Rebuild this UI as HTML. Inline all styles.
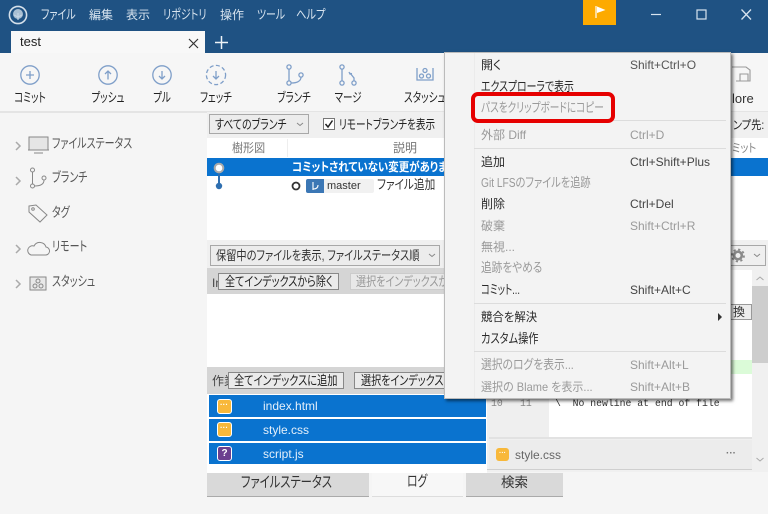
<!DOCTYPE html>
<html lang="ja"><head><meta charset="utf-8">
<style>
html,body{margin:0;padding:0;width:768px;height:514px;overflow:hidden;background:#f5f5f5}
body{position:relative;font-family:"Liberation Sans","Noto Sans CJK JP",sans-serif;color:#333}
.a,.t{position:absolute}
.t{white-space:nowrap;font-size:12px;line-height:16px;letter-spacing:0;font-feature-settings:"palt";transform-origin:left center}
.m{color:#d8e4ef}
.c{font-size:13px;transform:translateX(-50%) scaleX(.73);transform-origin:center;color:#222}
.g{color:#9a9a9a}
.k{color:#2a2a2a}
.s{color:#555;font-size:13.5px;transform:scaleX(.74)}
svg{position:absolute;overflow:visible}
.btn{position:absolute;background:#efefef;border:1px solid #a8a8a8;box-sizing:border-box}
.row{position:absolute;left:209px;width:277px;height:22px;background:#0a73cf}
.sh{font-size:12px;letter-spacing:0}
.sep{position:absolute;left:474px;width:252px;height:1px;background:#dcdcdc}
.lat{font-size:12px;letter-spacing:0}
</style></head><body>

<!-- header -->
<div class="a" style="left:0;top:0;width:768px;height:53px;background:#1f5283"></div>
<svg style="left:7px;top:4px" width="22" height="22" viewBox="0 0 22 22"><circle cx="11" cy="11" r="8.6" fill="none" stroke="#d5e0ea" stroke-width="1.6"/><circle cx="11" cy="10" r="5" fill="#a9bfd3"/><path d="M11 9v7M7 11l4 2 4-2" stroke="#c5d5e3" stroke-width="1.2" fill="none"/></svg>
<span class="t m" style="left:41px;top:7px;font-size:13px;transform:scaleX(.77)">ファイル</span>
<span class="t m" style="left:89px;top:7px">編集</span>
<span class="t m" style="left:126px;top:7px">表示</span>
<span class="t m" style="left:163px;top:7px;font-size:13px;transform:scaleX(.77)">リポジトリ</span>
<span class="t m" style="left:220px;top:7px">操作</span>
<span class="t m" style="left:257px;top:7px;font-size:13px;transform:scaleX(.76)">ツール</span>
<span class="t m" style="left:296px;top:7px;font-size:13px;transform:scaleX(.79)">ヘルプ</span>

<div class="a" style="left:583px;top:0;width:33px;height:25px;background:#fdaa00"></div>
<svg style="left:595px;top:5px" width="14" height="14" viewBox="0 0 14 14"><path d="M1 1v12" stroke="#fff" stroke-width="1.2"/><path d="M2 1.5L10.5 5 2 8z" fill="#fff"/></svg>
<svg style="left:650px;top:8px" width="110" height="14" viewBox="0 0 110 14"><path d="M1 6.5h10" stroke="#d8e4ef" stroke-width="1.2"/><rect x="47" y="2" width="9" height="9" fill="none" stroke="#d8e4ef" stroke-width="1.2"/><path d="M91.5 1.5l9.5 10M101 1.5l-9.5 10" stroke="#d8e4ef" stroke-width="1.3"/></svg>

<!-- tab -->
<div class="a" style="left:11px;top:31px;width:194px;height:23px;background:#f8f8f8"></div>
<span class="t" style="left:20px;top:34px;font-size:13px;color:#222">test</span>
<svg style="left:188px;top:38px" width="11" height="11" viewBox="0 0 11 11"><path d="M1 1l9 9M10 1l-9 9" stroke="#333" stroke-width="1.2"/></svg>
<svg style="left:214px;top:35px" width="15" height="15" viewBox="0 0 15 15"><path d="M7.5 1v13M1 7.5h13" stroke="#eef3f7" stroke-width="1.5"/></svg>

<!-- toolbar -->
<div class="a" style="left:0;top:53px;width:768px;height:58px;background:#f6f6f6"></div>
<div class="a" style="left:0;top:110.5px;width:768px;height:2px;background:#e4e4e4"></div>
<svg style="left:0;top:53px" width="450" height="40" viewBox="0 0 450 40" fill="none" stroke="#7f9fc9" stroke-width="1.3">
<circle cx="30" cy="22" r="9.2"/><path d="M30 18v8M26 22h8"/>
<circle cx="108" cy="22" r="9.2"/><path d="M108 26.5v-8M105 21l3-3 3 3"/>
<circle cx="162" cy="22" r="9.2"/><path d="M162 18v8M159 23l3 3 3-3"/>
<circle cx="216" cy="22" r="9.6" stroke-dasharray="4 2.4"/><path d="M216 18v8M213 23l3 3 3-3"/>
<circle cx="289" cy="14" r="2.1"/><circle cx="289" cy="30" r="2.1"/><circle cx="301" cy="22" r="2.1"/><path d="M289 16v12M291 30c6 0 10-2 10-6"/>
<circle cx="342" cy="14" r="2.1"/><circle cx="342" cy="30" r="2.1"/><circle cx="354" cy="30" r="2.1"/><path d="M342 16v12M354 28v-3l-4-5M349 19l1 2 2-.5"/>
<path d="M417 15v12h16V15M417 27h16"/><circle cx="425" cy="17.5" r="2"/><circle cx="421.5" cy="23" r="2"/><circle cx="428.5" cy="23" r="2"/>
</svg>
<span class="t c" style="left:30px;top:90px">コミット</span>
<span class="t c" style="left:108px;top:90px">プッシュ</span>
<span class="t c" style="left:162px;top:90px">プル</span>
<span class="t c" style="left:216px;top:90px">フェッチ</span>
<span class="t c" style="left:294px;top:90px">ブランチ</span>
<span class="t c" style="left:348px;top:90px">マージ</span>
<span class="t" style="left:404px;top:90px;color:#222;font-size:13px;transform:scaleX(.74)">スタッシュ</span>
<span class="t" style="left:732px;top:91px;color:#333;font-size:13px">lore</span>
<svg style="left:730px;top:64px" width="24" height="20" viewBox="0 0 24 20" fill="none" stroke="#999" stroke-width="1.1"><path d="M2 3h14l4 3v11H6"/><path d="M10 10h8v7h-8z"/></svg>

<!-- sidebar -->
<svg style="left:14px;top:135px" width="66" height="160" viewBox="0 0 66 160" fill="none" stroke="#888" stroke-width="1">
<g stroke="#aaa" stroke-width="1.5"><path d="M2 7l4 4-4 4M2 42l4 4-4 4M2 110l4 4-4 4M2 145l4 4-4 4"/></g>
<rect x="15" y="2" width="19" height="13" fill="#e5e5e5"/><path d="M14 15h21M20 18h9"/>
<circle cx="18.5" cy="35" r="2"/><circle cx="18.5" cy="51" r="2"/><circle cx="30" cy="43" r="2"/><path d="M18.5 37v12M20.5 51c6 0 9.5-2 9.5-6"/>
<path d="M15 71l7-1 11 10-7 7-11-10z"/><circle cx="19" cy="74" r="1.3"/>
<path d="M17 120h14a4 4 0 0 0 1-8 6.5 6.5 0 0 0-12-1 4.5 4.5 0 0 0-3 9z"/>
<rect x="16" y="142" width="16" height="13" fill="#e8e8e8"/><circle cx="24" cy="146" r="2"/><circle cx="21" cy="151" r="2"/><circle cx="27" cy="151" r="2"/>
</svg>
<span class="t s" style="left:52px;top:136px">ファイルステータス</span>
<span class="t s" style="left:52px;top:170px">ブランチ</span>
<span class="t s" style="left:52px;top:205px">タグ</span>
<span class="t s" style="left:52px;top:239px">リモート</span>
<span class="t s" style="left:52px;top:274px">スタッシュ</span>

<!-- branch filter -->
<div class="a" style="left:207px;top:112px;width:561px;height:360px;background:#f0f0f0"></div>
<div class="btn" style="left:209px;top:114px;width:100px;height:20px;background:#ececec"></div>
<span class="t" style="left:215px;top:117px;color:#222;font-size:13px;transform:scaleX(.76)">すべてのブランチ</span>
<svg style="left:296px;top:122px" width="8" height="5" viewBox="0 0 8 5"><path d="M1 1l3 2.5L7 1" fill="none" stroke="#888"/></svg>
<div class="a" style="left:323px;top:118px;width:12px;height:12px;background:#fff;border:1px solid #777;box-sizing:border-box"></div>
<svg style="left:323px;top:118px" width="12" height="12" viewBox="0 0 12 12"><path d="M2.5 6l2.5 3 4.5-6.5" fill="none" stroke="#222" stroke-width="1.5"/></svg>
<span class="t" style="left:339px;top:117px;color:#222;font-size:13px;transform:scaleX(.74)">リモートブランチを表示</span>
<span class="t" style="left:733px;top:117px;color:#222;transform:scaleX(.85)">ンプ先:</span>

<!-- graph table -->
<div class="a" style="left:207px;top:138px;width:561px;height:102px;background:#fff"></div>
<span class="t" style="left:232px;top:140px;color:#777;transform:scaleX(.92)">樹形図</span>
<span class="t" style="left:393px;top:140px;color:#777">説明</span>
<span class="t" style="left:732px;top:140px;color:#888;transform:scaleX(.85)">ミット</span>
<div class="a" style="left:287px;top:139px;width:1px;height:18px;background:#eee"></div>
<div class="a" style="left:207px;top:158px;width:561px;height:18px;background:#0a73cf"></div>
<svg style="left:207px;top:158px" width="30" height="36" viewBox="0 0 30 36"><path d="M12 14v14" stroke="#2f6fb0" stroke-width="2"/><circle cx="12" cy="10" r="4.3" fill="#fff" stroke="#aaa" stroke-width="2"/><circle cx="12" cy="28" r="3.2" fill="#2f6fb0"/></svg>
<span class="t" style="left:292px;top:159px;color:#fff;font-weight:700;transform:scaleX(.87)">コミットされていない変更がありま</span>
<svg style="left:291px;top:181px" width="10" height="10"><circle cx="5" cy="5" r="3.5" fill="#fff" stroke="#333" stroke-width="1.8"/></svg>
<div class="a" style="left:306px;top:179px;width:68px;height:14px;background:#f1f1f1;border-radius:2px"></div>
<div class="a" style="left:306px;top:179px;width:18px;height:14px;background:#3b77b5;border-radius:2px 0 0 2px"></div>
<svg style="left:310px;top:181px" width="10" height="10" viewBox="0 0 10 10"><path d="M3 1v8M3 8c3 0 5-1 5-4" fill="none" stroke="#fff" stroke-width="1.1"/></svg>
<span class="t" style="left:327px;top:178px;font-size:11px;color:#333">master</span>
<span class="t" style="left:377px;top:177px;color:#333;font-size:13px;transform:scaleX(.82)">ファイル追加</span>

<!-- pending filter -->
<div class="a" style="left:207px;top:240px;width:561px;height:30px;background:#f0f0f0"></div>
<div class="btn" style="left:210px;top:245px;width:230px;height:21px;background:#ececec"></div>
<span class="t" style="left:216px;top:248px;color:#333;font-size:13px;transform:scaleX(.785)">保留中のファイルを表示, ファイルステータス順</span>
<svg style="left:428px;top:253px" width="8" height="5" viewBox="0 0 8 5"><path d="M1 1l3 2.5L7 1" fill="none" stroke="#888"/></svg>
<div class="btn" style="left:728px;top:245px;width:38px;height:21px;background:#efefef"></div>
<svg style="left:730px;top:248px" width="34" height="15" viewBox="0 0 34 15"><circle cx="8" cy="7.5" r="3.8" fill="none" stroke="#8a8a8a" stroke-width="2.6"/><circle cx="8" cy="7.5" r="6" fill="none" stroke="#8a8a8a" stroke-width="1.8" stroke-dasharray="2.2 2.5"/><path d="M24 6l3 2.5L30 6" fill="none" stroke="#888"/></svg>

<!-- staged -->
<div class="a" style="left:207px;top:268px;width:280px;height:26px;background:#d5d5d5"></div>
<span class="t" style="left:212px;top:275px;color:#444">In</span>
<div class="btn" style="left:218px;top:273px;width:121px;height:17px;background:#eaeaea;border-color:#888"></div>
<span class="t" style="left:225px;top:274px;color:#222;font-size:13px;transform:scaleX(.775)">全てインデックスから除く</span>
<div class="btn" style="left:350px;top:273px;width:100px;height:17px;background:#e8e8e8;border-color:#ccc"></div>
<span class="t" style="left:356px;top:274px;color:#999;font-size:13px;transform:scaleX(.775)">選択をインデックスか</span>
<div class="a" style="left:207px;top:294px;width:280px;height:73px;background:#fff"></div>

<!-- unstaged -->
<div class="a" style="left:207px;top:367px;width:280px;height:27px;background:#d5d5d5"></div>
<span class="t" style="left:212px;top:373px;color:#444;width:16px;overflow:hidden">作業</span>
<div class="btn" style="left:228px;top:372px;width:116px;height:17px;background:#eaeaea;border-color:#888"></div>
<span class="t" style="left:234px;top:373px;color:#222;font-size:13px;transform:scaleX(.785)">全てインデックスに追加</span>
<div class="btn" style="left:354px;top:372px;width:100px;height:17px;background:#eaeaea;border-color:#888"></div>
<span class="t" style="left:361px;top:373px;color:#222;font-size:13px;transform:scaleX(.775)">選択をインデックス</span>
<div class="a" style="left:207px;top:394px;width:280px;height:79px;background:#fff"></div>
<div class="row" style="top:395px"></div>
<div class="row" style="top:419px"></div>
<div class="row" style="top:443px;height:21px"></div>
<div class="a" style="left:217px;top:399px;width:15px;height:15px;background:#f8b83a;border:1px solid #fff;box-sizing:border-box;border-radius:3px"></div>
<div class="a" style="left:217px;top:422px;width:15px;height:15px;background:#f8b83a;border:1px solid #fff;box-sizing:border-box;border-radius:3px"></div>
<div class="a" style="left:217px;top:446px;width:15px;height:15px;background:#6b3f8f;border:1px solid #fff;box-sizing:border-box;border-radius:3px;color:#fff;font-size:10px;line-height:13px;text-align:center;font-weight:700">?</div>
<span class="a" style="left:220px;top:401px;color:#fff;font-size:8px;line-height:8px;font-weight:700">···</span>
<span class="a" style="left:220px;top:424px;color:#fff;font-size:8px;line-height:8px;font-weight:700">···</span>
<span class="t lat" style="left:263px;top:398px;color:#e5f0fa">index.html</span>
<span class="t lat" style="left:263px;top:422px;color:#e5f0fa">style.css</span>
<span class="t lat" style="left:263px;top:446px;color:#e5f0fa">script.js</span>

<!-- right pane -->
<div class="a" style="left:489px;top:270px;width:263px;height:167px;background:#fff"></div>
<div class="a" style="left:489px;top:270px;width:60px;height:167px;background:#efefef"></div>
<div class="a" style="left:549px;top:360px;width:203px;height:14px;background:#dbfbd8"></div>
<div class="a" style="left:719px;top:304px;width:33px;height:16px;background:#ececec;border:1px solid #999;box-sizing:border-box"></div>
<span class="t" style="left:733px;top:304px;color:#333">換</span>
<div class="a" style="left:752px;top:270px;width:16px;height:200px;background:#f0f0f0"></div>
<div class="a" style="left:752px;top:286px;width:16px;height:77px;background:#cdcdcd"></div>
<svg style="left:755px;top:275px" width="10" height="190" viewBox="0 0 10 190" fill="none" stroke="#aaa"><path d="M1.5 5l3.5-3 3.5 3M1.5 183l3.5 3 3.5-3"/></svg>
<span class="a" style="left:491px;top:397px;font:9.8px/14px 'Liberation Mono',monospace;color:#888">10</span>
<span class="a" style="left:520px;top:397px;font:9.8px/14px 'Liberation Mono',monospace;color:#888">11</span>
<span class="a" style="left:555px;top:397px;font:9.8px/14px 'Liberation Mono',monospace;color:#333;white-space:pre">\  No newline at end of file</span>
<div class="a" style="left:489px;top:437px;width:263px;height:2px;background:#e2e2e2"></div>
<div class="a" style="left:489px;top:440px;width:263px;height:29px;background:#ececec"></div>
<div class="a" style="left:487px;top:469px;width:265px;height:1px;background:#cfcfcf"></div>
<div class="a" style="left:496px;top:448px;width:13px;height:13px;background:#f8b83a;border-radius:3px"></div>
<span class="a" style="left:499px;top:450px;color:#fff;font-size:7px;line-height:8px;font-weight:700">···</span>
<span class="t lat" style="left:515px;top:447px;color:#666">style.css</span>
<span class="t" style="left:726px;top:446px;color:#777;font-weight:700;font-size:10px">···</span>

<!-- bottom tabs -->
<div class="a" style="left:207px;top:473px;width:162px;height:24px;background:#d9d9d9;border-bottom:1px solid #aaa;box-sizing:border-box"></div>
<div class="a" style="left:372px;top:473px;width:91px;height:24px;background:#f7f7f7;border-bottom:1px solid #ddd;box-sizing:border-box"></div>
<div class="a" style="left:466px;top:473px;width:97px;height:24px;background:#d9d9d9;border-bottom:1px solid #aaa;box-sizing:border-box"></div>
<span class="t" style="left:241px;top:475px;font-size:15px;color:#333;transform:scaleX(.756)">ファイルステータス</span>
<span class="t" style="left:407px;top:474px;font-size:15px;color:#333;transform:scaleX(.72)">ログ</span>
<span class="t" style="left:501px;top:475px;font-size:13.5px;color:#333">検索</span>

<!-- context menu -->
<div class="a" style="left:444px;top:52px;width:287px;height:347px;background:#f3f3f3;border:1px solid #bbb;box-sizing:border-box;box-shadow:2px 2px 3px rgba(0,0,0,.55)"></div>
<div class="a" style="left:474px;top:53px;width:1px;height:345px;background:#ebebeb"></div>
<div class="sep" style="top:120px"></div>
<div class="sep" style="top:148px"></div>
<div class="sep" style="top:303px"></div>
<div class="sep" style="top:351px"></div>

<span class="t k" style="left:481px;top:57px">開く</span><span class="t sh" style="left:630px;top:57px;color:#555">Shift+Ctrl+O</span>
<span class="t k" style="left:481px;top:79px;font-size:13px;transform:scaleX(.76)">エクスプローラで表示</span>
<span class="t g" style="left:481px;top:100px;font-size:13px;transform:scaleX(.74)">パスをクリップボードにコピー</span>
<div class="a" style="left:471px;top:92px;width:144px;height:31px;border:4px solid #e60000;box-sizing:border-box;border-radius:7px"></div>
<span class="t g" style="left:481px;top:127px">外部 Diff</span><span class="t g sh" style="left:630px;top:127px">Ctrl+D</span>
<span class="t k" style="left:481px;top:154px">追加</span><span class="t sh" style="left:630px;top:154px;color:#444">Ctrl+Shift+Plus</span>
<span class="t g" style="left:481px;top:175px;font-size:13px;transform:scaleX(.785)">Git LFSのファイルを追跡</span>
<span class="t k" style="left:481px;top:196px">削除</span><span class="t sh" style="left:630px;top:196px;color:#444">Ctrl+Del</span>
<span class="t g" style="left:481px;top:218px">破棄</span><span class="t g sh" style="left:630px;top:218px">Shift+Ctrl+R</span>
<span class="t g" style="left:481px;top:239px">無視...</span>
<span class="t g" style="left:481px;top:260px;font-size:13px;transform:scaleX(.82)">追跡をやめる</span>
<span class="t k" style="left:481px;top:282px;font-size:13px;transform:scaleX(.72)">コミット...</span><span class="t sh" style="left:630px;top:282px;color:#444">Shift+Alt+C</span>
<span class="t k" style="left:481px;top:309px;transform:scaleX(.95)">競合を解決</span>
<svg style="left:717px;top:313px" width="6" height="8" viewBox="0 0 6 8"><path d="M1 0l4 4-4 4z" fill="#333"/></svg>
<span class="t k" style="left:481px;top:331px;font-size:13px;transform:scaleX(.785)">カスタム操作</span>
<span class="t g" style="left:481px;top:357px;font-size:13px;transform:scaleX(.83)">選択のログを表示...</span><span class="t g sh" style="left:630px;top:357px">Shift+Alt+L</span>
<span class="t g" style="left:481px;top:379px;transform:scaleX(.92)">選択の Blame を表示...</span><span class="t g sh" style="left:630px;top:379px">Shift+Alt+B</span>

</body></html>
